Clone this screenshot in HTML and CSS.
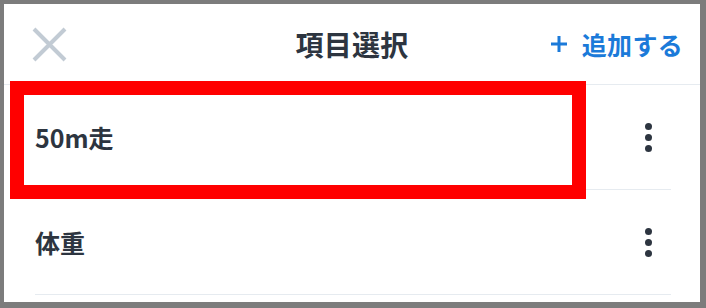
FILE: index.html
```html
<!DOCTYPE html>
<html lang="ja">
<head>
<meta charset="utf-8">
<link rel="stylesheet" href="styles.css">
</head>
<body>
<div class="frame">
  <header class="header">
    <div class="header-left">
      <svg class="close" width="35" height="35" viewBox="0 0 35 35"><path d="M2 2 L33 33 M33 2 L2 33" stroke="#c2cbd4" stroke-width="4" stroke-linecap="butt" fill="none"/></svg>
    </div>
    <h1 class="title">項目選択</h1>
    <div class="header-right">
      <button class="add">
        <svg class="plus" width="16" height="16" viewBox="0 0 16 16"><path d="M8 0 V16 M0 8 H16" stroke="#1b7ad9" stroke-width="3" fill="none"/></svg>
        <span>追加する</span>
      </button>
    </div>
  </header>
  <ul class="list">
    <li class="item"><span class="label">50m走</span><span class="kebab"><i></i><i></i><i></i></span></li>
    <li class="item"><span class="label">体重</span><span class="kebab"><i></i><i></i><i></i></span></li>
  </ul>
  <div class="highlight"></div>
</div>
</body>
</html>
```

FILE: styles.css
```css
html, body {
  margin: 0;
  padding: 0;
  background: #ffffff;
}
body {
  font-family: "Noto Sans CJK JP", "Noto Sans", sans-serif;
  color: #2d3540;
}
.frame {
  position: relative;
  box-sizing: border-box;
  width: 706px;
  height: 308px;
  border-style: solid;
  border-color: #7c7c7c;
  border-width: 4px 6px 6px 4px;
  background: #ffffff;
  overflow: hidden;
}
.header {
  display: grid;
  grid-template-columns: 1fr auto 1fr;
  align-items: center;
  height: 80px;
  border-bottom: 1px solid #e6ebf0;
}
.header-left {
  display: flex;
  align-items: center;
  padding-left: 28px;
  padding-top: 1px;
}
.close {
  display: block;
}
.title {
  margin: 0;
  font-size: 28px;
  font-weight: 700;
  line-height: 1;
  color: #2d3540;
  letter-spacing: 0.3px;
}
.header-right {
  display: flex;
  justify-content: flex-end;
  padding-right: 17px;
}
.add {
  display: flex;
  align-items: center;
  gap: 15px;
  border: 0;
  background: none;
  padding: 0;
  font-family: inherit;
  font-size: 25px;
  font-weight: 700;
  color: #1b7ad9;
  line-height: 1;
  letter-spacing: 0.3px;
}
.plus {
  display: block;
}
.list {
  list-style: none;
  margin: 0;
  padding: 0 29px 0 31px;
}
.item {
  display: flex;
  align-items: center;
  justify-content: space-between;
  height: 104px;
  border-bottom: 1px solid #e6ebf0;
}
.label {
  font-size: 25px;
  font-weight: 700;
  line-height: 1;
  color: #2d3540;
}
.kebab {
  display: flex;
  flex-direction: column;
  gap: 4px;
  margin-right: 19px;
}
.kebab i {
  display: block;
  width: 7px;
  height: 7px;
  border-radius: 50%;
  background: #2d3540;
}
.highlight {
  position: absolute;
  left: 6px;
  top: 77px;
  width: 576px;
  height: 118px;
  box-sizing: border-box;
  border: 14px solid #ff0000;
}
```
